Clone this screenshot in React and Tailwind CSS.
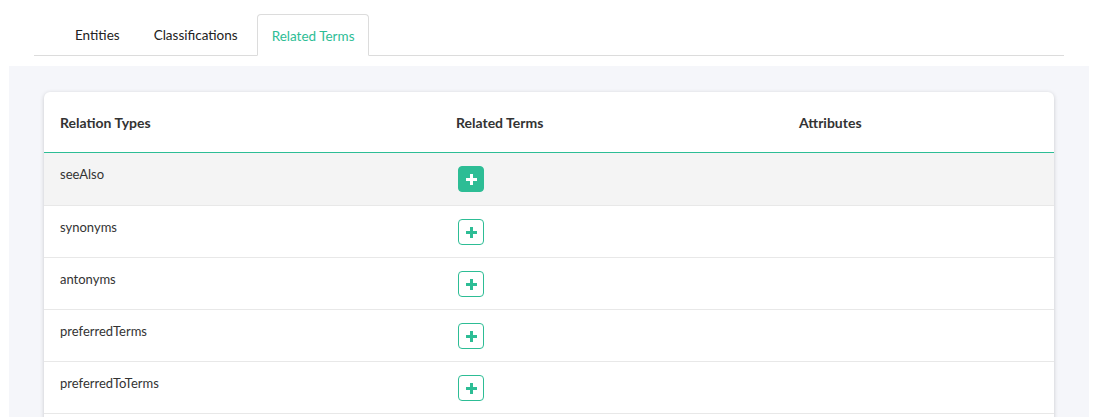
import React from 'react'

const rows = ['seeAlso', 'synonyms', 'antonyms', 'preferredTerms', 'preferredToTerms', '']

function PlusButton({ active }) {
  return (
    <button
      className={
        active
          ? 'w-[26px] h-[26px] rounded-[4px] bg-[#2dbd95] border border-[#2dbd95] flex items-center justify-center'
          : 'w-[26px] h-[26px] rounded-[4px] bg-white border border-[#2dbd95] flex items-center justify-center'
      }
    >
      <svg width="11" height="11" viewBox="0 0 11 11">
        <path d="M4 0h3v4h4v3h-4v4h-3v-4h-4v-3h4z" fill={active ? '#ffffff' : '#2dbd95'} />
      </svg>
    </button>
  )
}

export default function App() {
  return (
    <div className="w-[1098px] h-[417px] overflow-hidden bg-white font-['Lato',sans-serif] text-[14px]">
      <div className="px-[34px] pt-[14px]">
        <div className="flex items-end h-[42px] border-b border-[#dcdcdc] pl-[27px] text-[13.5px]">
          <div className="h-[41px] px-[14px] pt-[2px] flex items-center text-[#222]">Entities</div>
          <div className="h-[41px] px-[14px] pt-[2px] ml-[6px] flex items-center text-[#222]">Classifications</div>
          <div className="h-[42px] px-[14px] pt-[2px] ml-[5px] -mb-px flex items-center text-[#2dbd95] bg-white border border-[#dcdcdc] border-b-white rounded-t-[4px]">
            Related Terms
          </div>
        </div>
      </div>
      <div className="mt-[10px] mx-[9px] bg-[#f5f6fa] px-[35px] pt-[26px] h-[400px]">
        <div className="bg-white rounded-[6px] shadow-[0_1px_4px_rgba(0,0,0,0.18)]">
          <div className="grid grid-cols-[396px_343px_1fr] h-[60px] items-center px-[16px] font-bold text-[#333]">
            <div>Relation Types</div>
            <div>Related Terms</div>
            <div>Attributes</div>
          </div>
          <div className="h-px bg-[#2dbd95]"></div>
          {rows.map((r, i) => (
            <div
              key={i}
              className={
                i === 0
                  ? 'grid grid-cols-[396px_343px_1fr] h-[53px] border-b border-[#e8e8e8] px-[16px] bg-[#f4f4f4] text-[#333] text-[13px]'
                  : 'grid grid-cols-[396px_343px_1fr] h-[52px] border-b border-[#e8e8e8] px-[16px] text-[#333] text-[13px]'
              }
            >
              <div className="pt-[12px]">{r}</div>
              <div className="pt-[13px] pl-[2px]">
                {r && <PlusButton active={i === 0} />}
              </div>
              <div></div>
            </div>
          ))}
        </div>
      </div>
    </div>
  )
}
